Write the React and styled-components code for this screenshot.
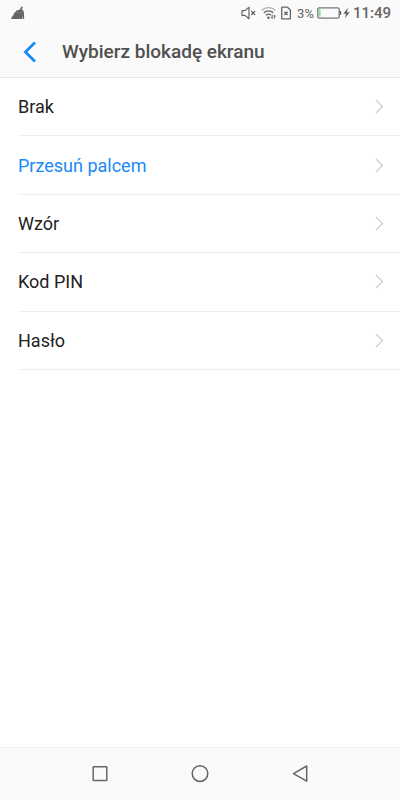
import React from "react"
import styled, { createGlobalStyle } from "styled-components"

const options = [
    { id: "none", label: "Brak" },
    { id: "swipe", label: "Przesuń palcem" },
    { id: "pattern", label: "Wzór" },
    { id: "pin", label: "Kod PIN" },
    { id: "password", label: "Hasło" }
]

const CleanerIcon = () => (
    <svg width="14" height="14" viewBox="0 0 14 14" fill="#666" aria-hidden="true">
        <path d="M8.800 3.600 10.500.4l1.400.7-1 2.600 1.500.8.5 2.200-8.700-.4 1.300-1.700 2-.7z" />
        <path d="M3.600 6.300h9.300l.3 6.700h-1.500l-.3-3.200-.5 3.200H.2c.1-1.200.7-2.300 1.500-3C2.500 9.200 3 7.800 3.600 6.300z" />
    </svg>
)

const MuteIcon = () => (
    <svg width="16" height="14" viewBox="0 0 16 14" fill="none" stroke="#666" strokeWidth="1.2" aria-hidden="true">
        <path d="M1 4.600h3L8 1.300v11.400L4 9.400H1z" strokeLinejoin="round" />
        <path d="M10.300 5l3.800 4M14.100 5l-3.800 4" />
    </svg>
)

const WifiIcon = () => (
    <svg width="16" height="14" viewBox="0 0 16 14" fill="none" stroke="#666" strokeWidth="1.4" aria-hidden="true">
        <path d="M.8 4.200c4-3.500 9.600-3.500 13.600 0" stroke="#aaa" />
        <path d="M2.800 6.800c2.800-2.500 6.800-2.500 9.600 0M4.900 9.300c1.600-1.400 3.600-1.400 5 0" />
        <circle cx="7.400" cy="11.800" r="1.300" fill="#666" stroke="none" />
        <path d="M11.200 8.500v3.800M9.900 10.900l1.300 1.500M13.300 12.800V9M13.300 9l1.300 1.500" strokeWidth="1" />
    </svg>
)

const SimIcon = () => (
    <svg width="11" height="14" viewBox="0 0 11 14" fill="none" stroke="#666" strokeWidth="1.3" aria-hidden="true">
        <path d="M.7 1.200h5.800l2.900 2.700v8.900H.7z" strokeLinejoin="round" />
        <path d="M3.400 5.800l3.200 3.200M6.600 5.800L3.400 9" />
    </svg>
)

const BatteryIcon = () => (
    <svg width="25" height="12" viewBox="0 0 25 12" fill="none" aria-hidden="true">
        <rect x=".8" y=".8" width="21.400" height="10.400" rx="1.500" stroke="#777" strokeWidth="1.300" />
        <path d="M2 2.200h1.700v7.600H2z" fill="#8be59a" />
        <path d="M22.500 4h1.700v4h-1.700z" fill="#666" />
    </svg>
)

const BoltIcon = () => (
    <svg width="7" height="12" viewBox="0 0 7 12" fill="#666" aria-hidden="true">
        <path d="M4.800.8.300 6.700h2.600L2 11.200l4.700-6H4z" />
    </svg>
)

const BackIcon = () => (
    <svg width="14" height="22" viewBox="0 0 14 22" fill="none" stroke="#1989fa" strokeWidth="2.800" aria-hidden="true">
        <path d="M12 1.600 2.400 11l9.600 9.400" />
    </svg>
)

const ChevronIcon = () => (
    <svg width="9" height="15" viewBox="0 0 9 15" fill="none" stroke="#ccc" strokeWidth="1.200" aria-hidden="true">
        <path d="M1 1l6.500 6.500L1 14" />
    </svg>
)

const App = () => (
    <Screen>
        <GlobalStyle />
        <StatusBar>
            <CleanerIcon />
            <StatusInfo>
                <StatusIcons>
                    <MuteIcon />
                    <WifiIcon />
                    <SimIcon />
                </StatusIcons>
                <Percent>3%</Percent>
                <Power>
                    <BatteryIcon />
                    <BoltIcon />
                </Power>
                <Clock>11:49</Clock>
            </StatusInfo>
        </StatusBar>
        <Header>
            <BackButton aria-label="Wstecz">
                <BackIcon />
            </BackButton>
            <Title>Wybierz blokadę ekranu</Title>
        </Header>
        <List>
            { options.map(({ id, label }) => (
                <ListItem key={ id }>
                    <Option $isSelected={ id === "swipe" }>
                        { label }
                        <ChevronIcon />
                    </Option>
                </ListItem>
            )) }
        </List>
        <Navigation>
            <NavButton aria-label="Ostatnie">
                <svg width="20" height="20" viewBox="0 0 20 20">
                    <rect x="3.200" y="2.800" width="13.600" height="13.600" rx=".5" />
                </svg>
            </NavButton>
            <NavButton aria-label="Ekran główny">
                <svg width="20" height="20" viewBox="0 0 20 20">
                    <circle cx="10" cy="9.600" r="7.800" />
                </svg>
            </NavButton>
            <NavButton aria-label="Cofnij">
                <svg width="20" height="20" viewBox="0 0 20 20">
                    <path d="M16.700 2v15.200L3.500 9.600z" strokeLinejoin="round" />
                </svg>
            </NavButton>
        </Navigation>
    </Screen>
)

const GlobalStyle = createGlobalStyle`
    body {
        margin: 0;
        background: #fff;
        font-family: Roboto, sans-serif;
    }

    svg {
        display: block;
        flex-shrink: 0;
    }

    button {
        padding: 0;
        border: 0;
        background: none;
        font-family: inherit;
        cursor: pointer;
    }
`
const Screen = styled.div`
    display: flex;
    flex-direction: column;
    min-height: 100vh;
`
const StatusBar = styled.div`
    display: flex;
    align-items: center;
    justify-content: space-between;
    height: 26px;
    padding: 0 9px 0 11px;
    background: #fafafa;
    color: #666;
`
const StatusInfo = styled.div`
    display: flex;
    align-items: center;
    gap: 3px;
`
const StatusIcons = styled.div`
    display: flex;
    align-items: center;
    gap: 4px;
    margin-right: 2px;
`
const Percent = styled.span`
    font-size: 13px;
`
const Power = styled.div`
    display: flex;
    align-items: center;
    gap: 1px;
`
const Clock = styled.time`
    font-size: 15px;
    font-weight: 500;
`
const Header = styled.header`
    display: flex;
    align-items: center;
    height: 51px;
    background: #fafafa;
    border-bottom: 1px solid #e6e6e6;
`
const BackButton = styled.button`
    display: flex;
    align-items: center;
    justify-content: center;
    width: 44px;
    height: 44px;
    margin: 0 10px 0 8px;
`
const Title = styled.h1`
    margin: 0;
    color: #505050;
    font-size: 19px;
    font-weight: 500;
`
const List = styled.ul`
    display: grid;
    grid-auto-rows: 1fr;
    min-height: 292px;
    margin: 0;
    padding: 0 0 0 18px;
    list-style: none;
`
const ListItem = styled.li`
    display: flex;
    border-bottom: 1px solid #eee;
`
const Option = styled.button`
    display: flex;
    flex: 1;
    align-items: center;
    justify-content: space-between;
    && {
        padding-right: 16px;
    }
    color: ${({ $isSelected }) => $isSelected ? "#1989fa" : "#222"};
    font-size: 18px;
    text-align: left;
`
const Navigation = styled.nav`
    display: flex;
    align-items: center;
    justify-content: center;
    gap: 56px;
    height: 52px;
    margin-top: auto;
    background: #fafafa;
    border-top: 1px solid #f0f0f0;
`
const NavButton = styled.button`
    display: flex;
    align-items: center;
    justify-content: center;
    width: 44px;
    height: 44px;

    svg {
        fill: none;
        stroke: #666;
        stroke-width: 1.5;
    }
`

export default App
